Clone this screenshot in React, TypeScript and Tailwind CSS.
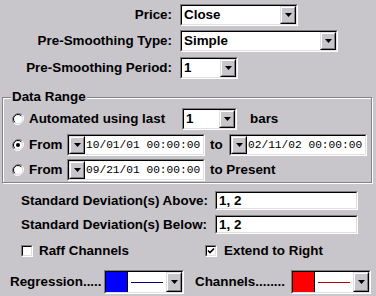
import React from "react";

const BG = "bg-[#c8c5cb]";

function Arrow() {
  return (
    <svg width="7" height="4" viewBox="0 0 7 4" className="block">
      <polygon points="0,0 7,0 3.5,4" fill="#000" />
    </svg>
  );
}

function DropBtn({ className = "" }: { className?: string }) {
  return (
    <div className={`border border-t-[#dfdfdf] border-l-[#dfdfdf] border-b-black border-r-black ${className}`}>
      <div className={`h-full w-full border border-t-white border-l-white border-b-[#808080] border-r-[#808080] ${BG} flex items-center justify-center`}>
        <Arrow />
      </div>
    </div>
  );
}

function Sunken({ className = "", children, inner = "" }: { className?: string; children?: React.ReactNode; inner?: string }) {
  return (
    <div className={`border border-t-[#808080] border-l-[#808080] border-b-white border-r-white ${className}`}>
      <div className={`h-full w-full border border-t-black border-l-black border-b-[#dfdfdf] border-r-[#dfdfdf] bg-white flex items-center overflow-hidden ${inner}`}>
        {children}
      </div>
    </div>
  );
}

function Combo({ w, text }: { w: string; text: string }) {
  return (
    <Sunken className={`${w} h-[22px]`}>
      <span className="flex-1 pl-[2px] whitespace-nowrap">{text}</span>
      <DropBtn className="w-[16px] h-full" />
    </Sunken>
  );
}

function Radio({ on }: { on?: boolean }) {
  return (
    <svg width="12" height="12" viewBox="0 0 12 12" className="block shrink-0">
      <path d="M10.2 1.8 A6 6 0 0 0 1.8 10.2" fill="none" stroke="#808080" strokeWidth="1" />
      <path d="M1.8 10.2 A6 6 0 0 0 10.2 1.8" fill="none" stroke="#fff" strokeWidth="1" />
      <circle cx="6" cy="6" r="4.5" fill="#fff" />
      <path d="M9.2 2.8 A4.5 4.5 0 0 0 2.8 9.2" fill="none" stroke="#000" strokeWidth="1" />
      <path d="M2.8 9.2 A4.5 4.5 0 0 0 9.2 2.8" fill="none" stroke="#dfdfdf" strokeWidth="1" />
      {on && <circle cx="6" cy="6" r="2" fill="#000" />}
    </svg>
  );
}

function Check({ on }: { on?: boolean }) {
  return (
    <Sunken className="w-[12px] h-[12px] shrink-0" inner="justify-center">
      {on && (
        <svg width="8" height="8" viewBox="0 0 8 8" className="block">
          <polyline points="1,3.5 3,5.5 7,1.5" fill="none" stroke="#000" strokeWidth="1.6" />
        </svg>
      )}
    </Sunken>
  );
}

function DateBox({ text }: { text: string }) {
  return (
    <Sunken className="h-[22px]">
      <DropBtn className="w-[16px] h-full" />
      <span className="w-[118px] pl-[1px] whitespace-nowrap overflow-hidden font-['Liberation_Mono',monospace] font-normal text-[11.2px]">
        {text}
      </span>
    </Sunken>
  );
}

function ColorPick({ color, line }: { color: string; line: string }) {
  return (
    <Sunken className="w-[80px] h-[24px]">
      <div className={`w-[22px] h-full ${color} border-r border-black`} />
      <div className="flex-1 h-full flex items-center justify-center">
        <div className={`w-[32px] h-[1px] ${line}`} />
      </div>
      <DropBtn className="w-[16px] h-full" />
    </Sunken>
  );
}

export default function App() {
  return (
    <div className={`w-[376px] h-[296px] ${BG} overflow-hidden font-['Liberation_Sans',Arial,sans-serif] font-bold text-[13.4px] leading-[16px] text-black`}>
      <div className="pt-[4px] flex flex-col">
        <div className="flex items-center h-[22px]">
          <span className="w-[172px] text-right">Price:</span>
          <div className="ml-[8px]"><Combo w="w-[118px]" text="Close" /></div>
        </div>
        <div className="flex items-center h-[22px] mt-[4px]">
          <span className="w-[172px] text-right">Pre-Smoothing Type:</span>
          <div className="ml-[8px]"><Combo w="w-[158px]" text="Simple" /></div>
        </div>
        <div className="flex items-center h-[22px] mt-[5px]">
          <span className="w-[172px] text-right">Pre-Smoothing Period:</span>
          <div className="ml-[8px]"><Combo w="w-[58px]" text="1" /></div>
        </div>
      </div>

      <fieldset className="mt-[10px] ml-[2px] w-[370px] border border-[#848288] shadow-[inset_1px_1px_0_#fff,1px_1px_0_#fff] pb-[1px]">
        <legend className={`ml-[8px] px-[1px] h-[16px] leading-[16px] ${BG}`}>Data Range</legend>
        <div className="flex flex-col mt-[3px] pl-[9px]">
          <div className="flex items-center h-[22px]">
            <Radio />
            <span className="ml-[5px] w-[153px]">Automated using last</span>
            <Combo w="w-[55px]" text="1" />
            <span className="ml-[13px]">bars</span>
          </div>
          <div className="flex items-center h-[22px] mt-[4px]">
            <Radio on />
            <span className="ml-[5px] w-[38px]">From</span>
            <DateBox text="10/01/01 00:00:00" />
            <span className="ml-[5px] w-[19px]">to</span>
            <DateBox text="02/11/02 00:00:00" />
          </div>
          <div className="flex items-center h-[22px] mt-[3px]">
            <Radio />
            <span className="ml-[5px] w-[38px]">From</span>
            <DateBox text="09/21/01 00:00:00" />
            <span className="ml-[5px]">to Present</span>
          </div>
        </div>
      </fieldset>

      <div className="flex flex-col mt-[8px]">
        <div className="flex items-center h-[19px]">
          <span className="ml-[21px] w-[194px]">Standard Deviation(s) Above:</span>
          <Sunken className="w-[143px] h-[19px]"><span className="pl-[2px]">1, 2</span></Sunken>
        </div>
        <div className="flex items-center h-[19px] mt-[5px]">
          <span className="ml-[21px] w-[194px]">Standard Deviation(s) Below:</span>
          <Sunken className="w-[143px] h-[19px]"><span className="pl-[2px]">1, 2</span></Sunken>
        </div>
        <div className="flex items-center h-[16px] mt-[9px]">
          <div className="ml-[21px]"><Check /></div>
          <span className="ml-[6px] w-[166px]">Raff Channels</span>
          <Check on />
          <span className="ml-[7px]">Extend to Right</span>
        </div>
        <div className="flex items-center h-[24px] mt-[11px]">
          <span className="ml-[10px] w-[94px]">Regression.....</span>
          <ColorPick color="bg-[#0000ff]" line="bg-[#000080]" />
          <span className="ml-[11px] w-[96px]">Channels........</span>
          <ColorPick color="bg-[#ff0000]" line="bg-[#c00000]" />
        </div>
      </div>
    </div>
  );
}
